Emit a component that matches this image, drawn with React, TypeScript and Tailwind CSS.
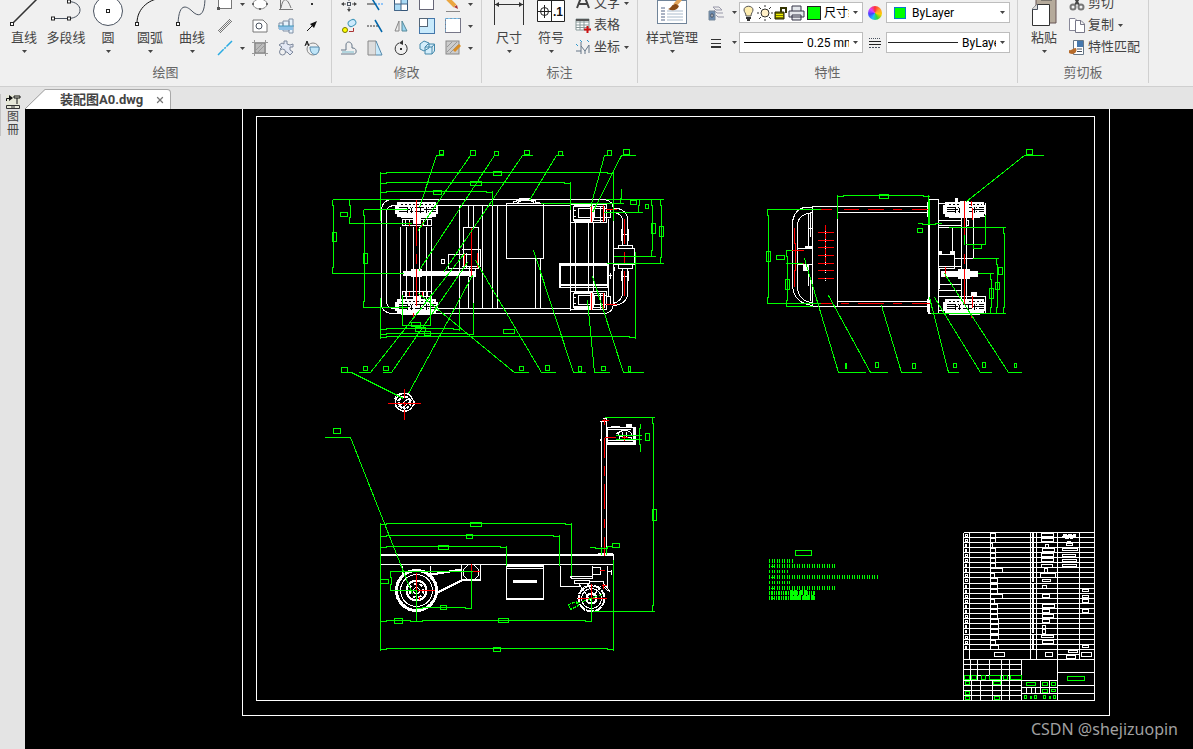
import type { ReactNode } from 'react';
import { X } from 'lucide-react';

type Box = [number, number, number, number];

const hdim = (x1: number, x2: number, y: number) =>
  `M${x1} ${y + 1}H${x1 + 6}V${y}H${x2 - 6}V${y + 1}H${x2}`;
const vdim = (y1: number, y2: number, x: number) =>
  `M${x} ${y1}V${y1 + 6}H${x + 1}V${y2 - 6}H${x}V${y2}`;

const dimensions = [
  // top view
  hdim(380, 613, 172), hdim(380, 570, 182), hdim(380, 492, 191),
  vdim(199, 273, 332), vdim(199, 223, 349), vdim(209, 307, 363),
  'M380 171V220M613 170V220M570 181V209M492 190V205',
  'M332 199H399M332 273H403M348 223H411M363 209H407M363 307H407',
  hdim(380, 635, 336), hdim(380, 459, 328), hdim(380, 473, 333),
  'M380 297V338M635 251V338M459 308V330M473 302V334M402 294V325H430V294',
  vdim(199, 256, 651), vdim(199, 263, 660),
  'M605 199H663M540 203H623M620 203V198H621V188M603 212H642M638 212V205H639V199M613 256H655M606 263H663',
  // bottom view
  hdim(837, 929, 195), 'M837 194V218M928 194V223M929 199V223',
  vdim(209, 303, 767), 'M766 209H820M766 303H820M785 250H791M785 263H802M785 306H812',
  vdim(250, 306, 786), vdim(227, 313, 1003), vdim(258, 313, 996), vdim(273, 313, 990),
  'M948 227H1005M972 258H998M977 273H993M930 313H1005M985 214V244H965M964 234V244',
  'M917 223H922V224H935V223H941',
  // side view
  vdim(417, 611, 652), 'M604 417H654M592 611H654M615 435H641M615 439H641M640 423V428H639V444H640V451',
  hdim(380, 571, 523), hdim(380, 559, 535), hdim(380, 506, 546),
  'M380 522V650M571 522V575M559 534V565M506 545V565M613 559V650',
  'M389 571H472M389 590H416', vdim(571, 590, 390), 'M416 590V621M471 571V608M591 598V621',
  hdim(416, 471, 607), hdim(380, 416, 620), hdim(416, 591, 620), hdim(380, 613, 648),
  'M589 547H595V548H607V546H612M601 546V554M606 546V554',
];

const leaders = [
  'M443 155H436L419 207', 'M475 155H470L417 231', 'M498 155H494L418 271',
  'M532 155H522L443 272', 'M563 155H556L529 200', 'M611 155H604L590 207',
  'M635 155H621L592 212', 'M341 372H351L403 398', 'M358 372H370L464 253',
  'M382 372H391L467 262', 'M408 393L472 275', 'M418 293L514 372H528',
  'M475 260L541 372H555', 'M533 250L573 372H585', 'M587 300L594 372H609',
  'M592 276L623 372H643', 'M1043 155H1024L966 201', 'M804 258L838 372H865',
  'M828 295L870 372H887', 'M881 305L901 372H921', 'M929 297L948 372H958',
  'M934 297L980 372H991', 'M944 273L1008 372H1021', 'M324 437H350L412 594',
];

const tags: Box[] = [
  [493, 171, 8, 4], [470, 181, 11, 4], [433, 190, 8, 4], [332, 232, 4, 9], [340, 212, 7, 4],
  [363, 253, 4, 10], [503, 329, 11, 4], [415, 327, 10, 4], [424, 331, 6, 4], [411, 322, 9, 4],
  [630, 200, 6, 4], [645, 204, 3, 4], [651, 223, 4, 10], [659, 226, 4, 10],
  [439, 150, 4, 4], [470, 150, 5, 5], [494, 151, 4, 4], [524, 150, 5, 4], [558, 151, 4, 4],
  [607, 150, 4, 5], [623, 149, 6, 5], [341, 367, 6, 5], [363, 366, 4, 4], [383, 366, 5, 4],
  [519, 366, 4, 4], [545, 365, 4, 5], [578, 366, 3, 5], [601, 366, 4, 4], [628, 366, 2, 5],
  [879, 194, 9, 4], [766, 251, 4, 10], [776, 255, 8, 4], [785, 279, 4, 10], [973, 244, 8, 4],
  [998, 267, 4, 7], [995, 282, 4, 7], [989, 288, 4, 10], [917, 228, 5, 4], [1026, 149, 6, 5],
  [845, 363, 1, 5], [875, 362, 3, 5], [912, 363, 3, 5], [953, 363, 3, 4], [982, 362, 3, 5],
  [1014, 363, 2, 4], [333, 428, 7, 5], [652, 509, 4, 11], [645, 433, 4, 7], [470, 522, 11, 4],
  [466, 534, 6, 4], [438, 545, 10, 4], [380, 579, 8, 4], [440, 605, 6, 4], [394, 618, 8, 5],
  [498, 618, 10, 4], [493, 647, 7, 4], [612, 543, 7, 4], [795, 550, 16, 5],
  // title block
  [1067, 676, 17, 4], [964, 675, 5, 4], [971, 675, 5, 4], [981, 675, 4, 4], [989, 675, 11, 4],
  [1003, 675, 4, 4], [1010, 675, 11, 4], [965, 681, 4, 3], [993, 681, 7, 3], [965, 691, 4, 3],
  [965, 696, 4, 3], [994, 696, 5, 3], [1026, 682, 9, 3], [1042, 682, 5, 3], [1051, 682, 4, 3],
  [1042, 689, 5, 3], [1051, 689, 4, 2], [1024, 695, 2, 3], [1030, 696, 0, 2], [1034, 695, 2, 3],
  [1043, 695, 2, 3], [1049, 696, 0, 2], [1053, 695, 2, 3],
];

const rowLines = [
  532, 537, 542, 547, 552, 557, 562, 567, 572, 577, 583, 588, 593, 598, 603, 608, 613, 618, 623,
  628, 634, 639, 644, 649,
];

// widths of the name boxes and of the material boxes, row by row
const nameWidths = [5, 5, 2, 5, 5, 5, 5, 12, 4, 7, 7, 7, 12, 4, 7, 7, 7, 8, 8, 8, 8, 5, 8];
const materialBoxes: Box[] = [
  [1041, 533, 12, 3], [1041, 538, 12, 3], [1045, 544, 3, 3], [1042, 548, 12, 3], [1041, 553, 12, 3],
  [1041, 558, 12, 3], [1041, 564, 11, 3], [1044, 568, 3, 4], [1040, 573, 15, 4], [1042, 579, 8, 2],
  [1042, 585, 4, 3], [1042, 594, 7, 3], [1042, 604, 12, 3], [1042, 609, 7, 3], [1042, 614, 11, 3],
  [1042, 619, 7, 3], [1042, 625, 3, 3], [1042, 629, 3, 4], [1041, 635, 12, 2], [1042, 640, 11, 3],
  [1066, 543, 6, 2], [1062, 548, 15, 2], [1062, 554, 13, 2], [1062, 559, 14, 2], [1062, 564, 14, 2],
  [1082, 589, 6, 2], [1082, 595, 6, 2], [1082, 599, 6, 3], [1082, 609, 6, 3], [1082, 645, 6, 2],
  [994, 652, 10, 4], [1045, 652, 7, 4], [1066, 655, 9, 3], [1068, 650, 9, 2], [1081, 652, 10, 4],
];

const notes: Box[] = [
  [768, 558, 24, 5], [768, 563, 67, 5], [768, 569, 19, 4], [768, 574, 109, 5],
  [768, 580, 21, 4], [768, 585, 67, 5], [768, 590, 46, 5], [768, 595, 46, 5],
];

function Boxes({ items }: { items: Box[] }) {
  return (
    <>
      {items.map(([x, y, w, h]) => (
        <rect key={`${x}-${y}`} x={x} y={y} width={w || 0.5} height={h} />
      ))}
    </>
  );
}

function Tire({ x, y }: { x: number; y: number }) {
  return (
    <g transform={`translate(${x} ${y})`}>
      <path d="M2 0H40V3H42V11H40V14H36V15H6V14H2V11H0V3H2Z" fill="#fff" />
      <g stroke="#000">
        <path d="M5 2H38" strokeDasharray="2 2" />
        <path d="M3 5H40M3 9H40" strokeDasharray="9 2 1 1 1 2" />
        <path d="M3 7H14M28 7H40" />
        <path d="M12 5V10M16 5V10M25 5V10M31 5V10" />
      </g>
    </g>
  );
}

function TopView() {
  return (
    <g>
      <path d="M391 199H604Q613 200 613 210V303Q612 313 604 313H391Q381 312 381 303V210Q381 200 391 199Z" />
      <path d="M395 205H570M395 308H570M395 205Q386 205 386 212V301Q386 308 395 308" />
      <path d="M400 226V302M406 226V302M413 226V302M419 226V302M426 226V302M431 226V302" />
      <path d="M459 205V308M468 205V227M473 205V227M468 276V308M473 276V308M482 205V308M492 205V308M497 205V308" />
      <path d="M402 219H431V225H402ZM402 291H431V296H402ZM405 219V225M409 219V225M423 219V225M427 219V225M405 291V296M409 291V296M423 291V296M427 291V296" />
      <path d="M413 217H420V223H413ZM413 296H420V301H413Z" fill="#fff" />
      <Tire x={395} y={202} />
      <Tire x={395} y={299} />
      <path d="M403 271H411V269H421V271H475V275H421V276H411V275H403Z" fill="#fff" />
      <path d="M463 227H478V268H463ZM448 254H471V268H448ZM461 249H480V266H461M464 252V267M466 252V267M469 266V276H475V268" />
      <rect x="441" y="259" width="3" height="4" />
      <path d="M506 203H543V258H506ZM535 258V308M540 258V308" />
      <path d="M513 203V201H516V200H519V198H530V200H535V202H539V203M517 202L521 200H530L534 202" />
      <path d="M570 205V310M575 222V291M588 222V291M593 222V291M608 218V296" />
      {[204, 291].map((y) => (
        <g key={y} transform={`translate(0 ${y})`}>
          <path d="M570 0H606V18H570ZM573 2H604V16H573ZM578 4H594V13H578ZM594 4H606V13H594ZM600 1V17M606 5H610V13H606" />
          <path d="M574 0H592V2H574ZM574 15H592V17H574ZM590 2H593V15H590ZM572 6H575M572 12H575" fill="#fff" />
        </g>
      ))}
      <path d="M559 263H608V287H559ZM560 264H607V265H560ZM560 284H607V285H560ZM560 263V287M607 263V287M608 275H611M610 272V278M614 266V270" />
      <path d="M613 208H618Q627 211 627 219V245M613 212Q622 213 622 220V245M621 228V240M628 228V240M621 234H628M621 276H628M621 270V280M628 270V280M622 268V292Q622 300 613 303M627 268V295Q625 304 614 305" />
      <path d="M613 248H634V264H613ZM618 245H632V248H618ZM618 264H632V268H618Z" />
      <g stroke="#f00">
        <path d="M416 199V245M416 253V263M416 268V305M409 221V225M422 221V225M409 291V295M422 291V295M413 312V316" />
        <path d="M471 227V276M464 252V267M477 252V267M591 204V221M603 204V221M591 292V309M603 292V309M605 209H616M605 304H616" />
        <path d="M624 218V243M624 251V262M624 270V295" />
      </g>
      <circle cx="404" cy="402" r="9" />
      <path d="M395 396L399 393H408L415 403L408 410H400L395 406Z" />
      <circle cx="404" cy="402" r="6" strokeWidth="2" strokeDasharray="3 1" />
      <path d="M397 407L409 397M400 409L412 399M396 397L401 393M394 398L399 401" />
      <path d="M387 403H420M404 388V397M404 401V405M404 409V419" stroke="#f00" />
    </g>
  );
}

function BottomView() {
  return (
    <g>
      <path d="M812 207H803Q792 211 792 224V286Q794 303 812 305M812 212Q797 214 797 225V288Q799 301 812 302" />
      <path d="M797 248H812V264H797M804 246H812M808 212V245M810 212V236M808 228H812M808 264V285M810 276V300" />
      <path d="M803 265H808V270H803ZM805 246H811V248H805Z" fill="#fff" />
      <path d="M812 206H837V306H812Z" />
      <path d="M837 206H928M837 212H928M837 301H928M837 306H928M927 201V216M927 298V311" />
      <path d="M928 199H938V313H928ZM929 199V313" />
      <path d="M938 203H945M938 220H961V225H938M938 227H952V252M938 254H954V268H938M954 258H972M938 266H961M939 268V288M938 284H961M961 266V290M938 290H961M938 296H985V313M938 310H945" />
      <path d="M961 215V300M966 215V300M973 215V258M966 220H968V225H966M973 216H985M985 202V214" />
      <Tire x={943} y={202} />
      <Tire x={943} y={299} />
      <path d="M941 271H958V269H969V271H977V276H969V278H958V276H941ZM960 201H968V215H960ZM955 198H957V203H955ZM971 292H976V295H971ZM960 299H968V303H960ZM939 251H941V254H939ZM950 251H954V254H950Z" fill="#fff" />
      <g stroke="#f00">
        <path d="M820 209H831M843 209H858M867 209H883M892 209H901M911 209H928M820 303H831M840 303H848M857 303H883M892 303H901M911 303H930" />
        <path d="M825 224V264M817 232H833M817 240H833M817 247H833M817 255H833M817 263H833M817 270H833M817 278H833" />
        <path d="M794 227V243H795V270H794V286M791 250H803M791 263H803" />
        <path d="M964 200V234M964 253V263M964 268V304M971 200V205M972 207V219M972 295V307M945 266V276M971 314V317" />
      </g>
      <path d="M825 230V234M825 238V242M825 245V249M825 253V257M825 261V265M825 269V273M825 277V281" strokeDasharray="1 1" />
    </g>
  );
}

function SideView() {
  return (
    <g>
      <path d="M380 554H613M380 555H613M380 564H613M613 555V569M597 553H612" />
      <path d="M601 420V554M606 420V554M602 418H606V421H599M600 438V440M607 427H634V443H607ZM607 429H630M607 440H634" />
      <path d="M633 427H635V444H607V442H633ZM626 424H631V427H626ZM611 426H619V427H611Z" fill="#fff" />
      <path d="M617 436Q618 430 624 430Q631 430 632 436M619 440V436H622V431M626 431V437H631V440M616 433L620 431" />
      <path d="M506 565H543V599H506ZM506 566H543M506 568H543M506 598H543" />
      <path d="M513 580H536V582H513Z" fill="#fff" />
      <circle cx="416" cy="590" r="20" strokeWidth="3" />
      <circle cx="416" cy="590" r="16" />
      <circle cx="416" cy="590" r="10" strokeWidth="2" />
      <circle cx="416" cy="590" r="7" strokeWidth="2" strokeDasharray="3 3" />
      <circle cx="416" cy="590" r="3" />
      <path d="M402 565V574M430 565V574M461 564V580H480V564M461 579H480M467 565L463 569V575L467 579H474L478 575V569L474 565" />
      <path d="M431 574L461 569M435 593L463 579" strokeWidth="2" />
      <path d="M560 565V586H579M571 565V576M570 576H592V578H571ZM574 580H589V583H574ZM592 565V576M592 567H600V574H592M607 565V587M607 571H611M611 569V574M588 581H603V586" />
      <path d="M578 583L591 601M587 583L594 596M600 586L594 594M604 584L610 592M603 586L608 591" />
      <circle cx="591" cy="598" r="13" strokeWidth="2" strokeDasharray="8 1" />
      <circle cx="591" cy="598" r="10" />
      <circle cx="591" cy="598" r="5" strokeWidth="2" />
      <g stroke="#f00">
        <path d="M604 418V424M601 420H608M604 437H615M604 437V457M604 465V475M604 483V508M604 518V527M604 536V555M621 437H627M624 434V440" />
        <path d="M416 572V592M417 590H434M419 596V599M471 563V571H479M577 598H606M591 583V605M599 570H604M601 585H606M603 583V588" />
      </g>
      <g stroke="#0f0">
        <path d="M576 603L602 594" strokeDasharray="4 2" />
        <path d="M568 604L576 601L578 605L570 609Z" strokeDasharray="3 1" />
      </g>
    </g>
  );
}

function TitleBlock() {
  return (
    <g>
      {rowLines.map((y) => (
        <path key={y} d={`M963 ${y}H1094`} />
      ))}
      <path d="M963 532V700M969 532V659M1030 532V659M1036 532V659M1057 532V700M1079 532V659M963 659H1094M1057 654H1079" />
      {rowLines.slice(0, -1).map((y, i) => (
        <g key={y}>
          <rect x={990} y={y + 1} width={nameWidths[i]} height={4} />
          <rect x={965} y={y + 2} width={i % 4 < 2 ? 2 : 1} height={2} />
          <rect x={1032} y={y + 1} width={1} height={3} />
        </g>
      ))}
      <path d="M1062 534H1075V536H1062ZM1064 538H1072M1066 541H1070" fill="#fff" strokeDasharray="4 1" />
      <Boxes items={materialBoxes} />
      <path d="M963 664H1021M963 669H1021M963 675H1021M963 680H1057M963 685H1021M963 690H1021M963 695H1021" />
      <path d="M970 659V680M977 659V680M989 659V680M1001 659V700M1009 659V700M971 680V700M980 680V700M992 680V700M1021 659V700" />
      <path d="M1021 687H1057M1021 693H1057M1040 680V693M1049 680V693M1026 687V693M1031 687V693M1035 687V693M1057 672H1094M1057 685H1094M1057 693H1094" />
    </g>
  );
}

function Drawing() {
  return (
    <svg
      viewBox="25 109 1168 640"
      preserveAspectRatio="xMinYMin slice"
      className="block h-full w-full"
      shapeRendering="crispEdges"
      role="img"
      aria-label="装配图A0"
    >
      <g transform="translate(0.5 0.5)" fill="none" stroke="#fff">
        <path d="M242 100V715H1109V100" />
        <rect x="256" y="116" width="838" height="584" />
        <TopView />
        <BottomView />
        <SideView />
        <TitleBlock />
        <g stroke="#0f0">
          {dimensions.map((d) => (
            <path key={d} d={d} />
          ))}
          {leaders.map((d) => (
            <path key={d} d={d} />
          ))}
          <Boxes items={tags} />
          {notes.map(([x, y, w, h], i) => (
            <path
              key={y}
              d={`M${x} ${y + 2}H${x + w}`}
              strokeWidth={h - 1}
              strokeDasharray={i > 5 ? '1 1 2 1 1 1' : '1 2 1 1'}
            />
          ))}
          <path d="M789 592H797M799 592H806M789 597H800M802 597H813" strokeWidth="5" strokeDasharray="3 1" />
          <path d="M769 560V562M770 566H773M770 577H773M770 588H773M770 598H773" />
        </g>
      </g>
    </svg>
  );
}

function Arrow() {
  return (
    <svg width="5" height="3" viewBox="0 0 5 3" className="shrink-0" aria-hidden="true">
      <path d="M0 0H5L2.5 3Z" fill="#444" />
    </svg>
  );
}

function Icon({ w = 16, h = 16, children }: { w?: number; h?: number; children: ReactNode }) {
  return (
    <svg
      width={w}
      height={h}
      viewBox={`0 0 ${w} ${h}`}
      fill="none"
      stroke="#4a5360"
      className="shrink-0"
      aria-hidden="true"
    >
      {children}
    </svg>
  );
}

function BigButton({ icon, label, arrow = true }: { icon: ReactNode; label: string; arrow?: boolean }) {
  return (
    <button type="button" className="flex min-w-[42px] shrink-0 flex-col items-center">
      {icon}
      <span className="text-[13px] leading-[18px] whitespace-nowrap">{label}</span>
      <span className="flex h-[10px] items-center">{arrow && <Arrow />}</span>
    </button>
  );
}

function Tool({ name, children }: { name: string; children: ReactNode }) {
  return (
    <button type="button" aria-label={name} className="flex h-[22px] items-center justify-center">
      {children}
    </button>
  );
}

function TextTool({ icon, label, arrow = false }: { icon: ReactNode; label: string; arrow?: boolean }) {
  return (
    <button type="button" className="flex h-[22px] items-center gap-[3px] text-[13px] whitespace-nowrap">
      {icon}
      <span>{label}</span>
      {arrow && <span className="ml-px flex"><Arrow /></span>}
    </button>
  );
}

function Group({ title, className, children }: { title: string; className: string; children: ReactNode }) {
  return (
    <section className={`flex h-[83px] shrink-0 flex-col justify-end overflow-hidden border-r border-[#d0d0d0] ${className}`}>
      <div className="flex items-end">{children}</div>
      <h2 className="h-[21px] shrink-0 text-center text-[13px] leading-5 text-[#666]">{title}</h2>
    </section>
  );
}

const handle = (x: number, y: number) => <rect x={x} y={y} width="3" height="3" fill="#fff" stroke="#222" />;

function DrawGroup() {
  return (
    <Group title="绘图" className="w-[332px]">
      <div className="flex pb-[6px] pl-[3px]">
        <BigButton
          label="直线"
          icon={<Icon w={32} h={32}><path d="M4 28L31 1" stroke="#333" strokeWidth="1.5" />{handle(2.5, 26.5)}</Icon>}
        />
        <BigButton
          label="多段线"
          arrow={false}
          icon={<Icon w={32} h={32}><path d="M3 22.500H18C34 22.500 34 5.500 18 5.500" />{handle(1.5, 21)}{handle(17.5, 21)}{handle(17.5, 4)}</Icon>}
        />
        <BigButton
          label="圆"
          icon={<Icon w={32} h={32}><circle cx="16" cy="15" r="14.500" fill="#fff" />{handle(14.5, 13.5)}</Icon>}
        />
        <BigButton
          label="圆弧"
          icon={<Icon w={32} h={32}><path d="M3 27C3 12 16 2 30 2" stroke="#111" />{handle(1.5, 26.5)}{handle(28.5, 0.5)}</Icon>}
        />
        <BigButton
          label="曲线"
          icon={<Icon w={32} h={32}><path d="M2 28C3 4 12 11 17 16C25 23 29 16 29 1" />{handle(0.5, 26.5)}</Icon>}
        />
      </div>
      <div className="ml-[2px] grid grid-cols-[20px_14px_22px_30px_22px] pb-[3px]">
        <Tool name="矩形"><Icon><rect x="1.500" y="1.500" width="13" height="11" fill="#fff" stroke="#777" /><path d="M0 11H3V14H0Z" fill="#555" stroke="none" /></Icon></Tool>
        <Tool name="矩形选项"><Arrow /></Tool>
        <Tool name="椭圆"><Icon><ellipse cx="8" cy="8" rx="7" ry="5" fill="#fff" stroke="#888" /><path d="M7 3H9M7 13H9M1 7V9M15 7V9" stroke="#111" /></Icon></Tool>
        <Tool name="函数曲线"><Icon><path d="M2.500 0V14M1 13.500H15M3 12C5 1 9 1 13 12" stroke="#777" /></Icon></Tool>
        <Tool name="点"><Icon><rect x="7" y="7" width="2" height="2" fill="#333" stroke="none" /></Icon></Tool>

        <Tool name="双线"><Icon><path d="M1 13L13 1M3 15L15 3M2 14L14 2" stroke="#777" /></Icon></Tool>
        <span />
        <Tool name="面域"><Icon><path d="M1 2H11L15 6V14H1Z" fill="#fff" stroke="#777" /><circle cx="7" cy="8" r="3" /></Icon></Tool>
        <Tool name="轴"><Icon><path d="M11 1H15V15H11ZM5 3H11V13H5ZM1 5H5V11H1Z" fill="#e8f2fb" stroke="#8090a5" /><path d="M1 8H15V12H1Z" fill="#8fc0e6" stroke="none" /><path d="M0 8H16" stroke="#49b" /></Icon></Tool>
        <Tool name="箭头"><Icon><path d="M3 13L9 7" stroke="#111" /><path d="M13 3L6 6L10 10Z" fill="#111" stroke="none" /></Icon></Tool>

        <Tool name="中心线"><Icon><path d="M1 15L15 1" stroke="#29abe2" strokeDasharray="8 1 2 1" strokeWidth="1.500" /></Icon></Tool>
        <Tool name="中心线选项"><Arrow /></Tool>
        <Tool name="填充"><Icon><path d="M3 3H13V13H3Z" fill="#bbb" stroke="#777" /><path d="M0 2.500H16M0 13.500H16M2.500 0V16M13.500 0V16M4 10L10 4M6 12L12 6" stroke="#999" /></Icon></Tool>
        <Tool name="齿轮"><Icon><path d="M6 1H9V4L12 5L15 4V7H12V10L15 12L12 15L9 12H7L6 10L2 9L4 7L1 5L4 3L6 4Z" fill="#e3e8f4" stroke="#7c879b" /><circle cx="4.500" cy="12" r="3" fill="#f0f0f0" stroke="#7c879b" /></Icon></Tool>
        <Tool name="局部放大"><Icon><circle cx="9" cy="9" r="6" stroke="#888" /><path d="M6 7H15C16 17 6 17 6 7Z" fill="#bfe5f8" stroke="#58a" /><path d="M1 6L3 1L5 6M2 4H4" stroke="#111" /></Icon></Tool>
      </div>
    </Group>
  );
}

function ModifyGroup() {
  return (
    <Group title="修改" className="w-[150px]">
      <div className="ml-[4px] grid grid-cols-[26px_26px_26px_26px_26px_8px] pb-[3px]">
        <Tool name="移动"><Icon><path d="M8 2V5M8 11V14M2 8H5M11 8H14" stroke="#555" /><path d="M6 3L8 0L10 3ZM6 13L8 16L10 13ZM3 6L0 8L3 10ZM13 6L16 8L13 10Z" fill="#444" stroke="none" /><rect x="6.500" y="6.500" width="3" height="3" /></Icon></Tool>
        <Tool name="裁剪"><Icon><path d="M0 8H8" stroke="#333" /><path d="M8 8H16" stroke="#39f" strokeDasharray="2 1" /><path d="M4 1L12 14" stroke="#06a" strokeWidth="1.500" /></Icon></Tool>
        <Tool name="阵列"><Icon><path d="M1.500 1.500H14.500V14.500H1.500Z" fill="#fff" stroke="#357" /><path d="M8 1.500H14.500V8H8ZM1.500 8H8V14.500H1.500Z" fill="#a9daf5" stroke="#468" /></Icon></Tool>
        <Tool name="矩形框"><Icon><rect x=".5" y=".5" width="14" height="13" fill="#fff" stroke="#667" /></Icon></Tool>
        <Tool name="编辑"><Icon><path d="M1 1L10 10" stroke="#eba640" strokeWidth="4" /><path d="M9 11L12 9L13 13Z" fill="#a33" stroke="none" /><path d="M1 15.500H15" stroke="#888" /></Icon></Tool>
        <Tool name="编辑选项"><Arrow /></Tool>

        <Tool name="复制对象"><Icon><rect x="7" y="2" width="8" height="6" rx="3" transform="rotate(-30 11 5)" fill="#cdeafc" stroke="#49b" /><circle cx="4" cy="12" r="2.500" fill="#ff0" stroke="#770" /><path d="M8 13.500H12.500V10" stroke="#a33" /></Icon></Tool>
        <Tool name="延伸"><Icon><path d="M0 8H11" stroke="#333" strokeDasharray="2 1" /><path d="M8 2L15 14" stroke="#06a" strokeWidth="1.500" /></Icon></Tool>
        <Tool name="镜像"><Icon><path d="M6 3V13H2Z" fill="#eee" stroke="#888" /><path d="M9 3V13H14Z" fill="#9cd5f0" stroke="#589" /></Icon></Tool>
        <Tool name="缩放"><Icon><rect x=".5" y=".5" width="15" height="15" fill="#c8eafc" stroke="#47a" /><rect x=".5" y=".5" width="8" height="8" fill="#fff" stroke="#567" /></Icon></Tool>
        <Tool name="拉伸"><Icon><rect x=".5" y=".5" width="15" height="14" fill="#fff" stroke="#778" /><path d="M0 14V.5H15" stroke="#7bc4ee" strokeDasharray="3 1" /></Icon></Tool>
        <Tool name="拉伸选项"><Arrow /></Tool>

        <Tool name="偏移"><Icon><path d="M0 10H5V5C5 1 10 1 11 5V8H12C16 8 16 14 13 14H0" stroke="#678" /><path d="M1 12H13" stroke="#7bc" /></Icon></Tool>
        <Tool name="斜切"><Icon><path d="M1 1H9V15H1Z" fill="#ddd" stroke="#888" /><path d="M9 1L15 15H9" fill="#c8eafc" stroke="#58a" /></Icon></Tool>
        <Tool name="旋转"><Icon><path d="M6 3A6 6 0 1 0 12 4" stroke="#333" /><path d="M10 0L6 3L10 5ZM7 8H9V10H7Z" fill="#333" stroke="none" /></Icon></Tool>
        <Tool name="三维"><Icon><path d="M1 4L5 1L10 3V8L5 11L1 9ZM6 7H13V14H6ZM6 7L9 4H15.500L13 7M15.500 4V11L13 14" fill="#d3edfb" stroke="#48a" /></Icon></Tool>
        <Tool name="填充编辑"><Icon><rect x="1" y="1" width="13" height="13" fill="#ccc" stroke="#888" /><path d="M2 12L12 2M5 13L13 5M2 7L7 2" stroke="#999" /><path d="M9 11L15 5" stroke="#d98d24" strokeWidth="3" /></Icon></Tool>
        <Tool name="填充编辑选项"><Arrow /></Tool>
      </div>
    </Group>
  );
}

function AnnotateGroup() {
  return (
    <Group title="标注" className="w-[156px]">
      <div className="flex pb-[6px] pl-[6px]">
        <BigButton
          label="尺寸"
          icon={<Icon w={30} h={32}><path d="M.5 0V29M29.500 0V29M1 8.500H29" stroke="#333" /><path d="M1 8.500L5 6V11ZM29 8.500L25 6V11Z" fill="#333" stroke="none" /></Icon>}
        />
        <BigButton
          label="符号"
          icon={
            <Icon w={28} h={32}>
              <path d="M.5 4.500H27.500V25.500H.5ZM14.500 4V26" fill="#fff" stroke="#222" />
              <circle cx="7.500" cy="15.500" r="4" stroke="#222" />
              <path d="M1 15.500H14M7.500 9V22" stroke="#222" />
              <text x="16" y="20" fill="#111" stroke="none" fontSize="12" fontWeight="700" fontFamily="Liberation Sans, sans-serif">.1</text>
            </Icon>
          }
        />
      </div>
      <div className="ml-[3px] flex flex-col pb-1">
        <TextTool
          label="文字"
          arrow
          icon={<Icon><path d="M2 13L7 0H9L14 13M4 9H12" stroke="#444" strokeWidth="2" /></Icon>}
        />
        <TextTool
          label="表格"
          icon={<Icon><path d="M1 2H14V13H1ZM1 5H14M1 8H14M1 10.500H14M5 2V13M9 2V13" fill="#fff" stroke="#899" /><path d="M1 3H14" stroke="#555" strokeWidth="2" /><path d="M12.500 9V16M9 12.500H16" stroke="#c11" strokeWidth="2" /></Icon>}
        />
        <TextTool
          label="坐标"
          arrow
          icon={<Icon><path d="M6 3V15M1 12H6M6 7L10 12L14 6V14M10 12V15" stroke="#678" /><path d="M5 1L7 3M12 1L14 3M1 5L3 7" stroke="#39c" /></Icon>}
        />
      </div>
    </Group>
  );
}

const combo = 'ml-[2px] flex h-[21px] w-[124px] items-center border border-[#bdbdbd] bg-white pr-1';
const comboSelect =
  "mr-1 min-w-0 flex-1 appearance-none overflow-hidden bg-transparent font-['Roboto','Noto_Sans_CJK_SC',sans-serif] text-[12px] text-black";

function PropertyGroup() {
  return (
    <Group title="特性" className="w-[380px]">
      <div className="pb-[6px] pl-[8px]">
        <BigButton
          label="样式管理"
          icon={
            <Icon w={34} h={32}>
              <rect x="2.500" y="4.500" width="29" height="23" fill="#fff" stroke="#708499" />
              <path d="M6 12H10M6 15H10M6 18H10M6 21H10M6 24H10" stroke="#568" />
              <path d="M12 15H28M12 18H28M12 21H28M12 24H28" stroke="#abc" />
              <path d="M20 9L28 0" stroke="#e2a55b" strokeWidth="4" />
              <path d="M13 13C17 12 16 8 21 8L24 10C22 15 17 15 13 13Z" fill="#8a4b16" stroke="none" />
            </Icon>
          }
        />
      </div>
      <div className="ml-[10px] grid grid-cols-[16px_13px_129px_18px_126px] items-center gap-y-[9px] pb-[9px]">
        <Icon><path d="M1 6H7V15H1Z" fill="#6d8caf" stroke="#789" /><path d="M3 9H5V12H3Z" fill="#fff" /><path d="M5 2H11L14 5H8ZM6 5L9 8H15M8 10L10 12H16" stroke="#99a" fill="#eee" /></Icon>
        <span className="flex justify-end"><Arrow /></span>
        <div className={combo}>
          <Icon w={17} h={18}><path d="M6 12C6 9 4 8 4 6C4 1 13 1 13 6C13 8 11 9 11 12Z" fill="#ffeeb0" stroke="#555" /><path d="M6 14H11M7 16H10" stroke="#333" strokeWidth="2" /></Icon>
          <Icon w={16} h={18}><circle cx="8" cy="9" r="4" fill="#fff0c8" stroke="#333" /><path d="M8 1V3M8 15V17M0 9H2M14 9H16M2 3L4 5M12 13L14 15M2 15L4 13M12 5L14 3" stroke="#333" /></Icon>
          <Icon w={15} h={18}><path d="M2 8H11V15H2Z" fill="#770" stroke="#220" /><path d="M3 10.500H10M3 12.500H10" stroke="#ee0" /><path d="M8 8V4H13V9" stroke="#330" strokeWidth="2" /></Icon>
          <Icon w={17} h={18}><path d="M4 7V2H13V7M1 7H16V13H1ZM4 11H13V16H4Z" fill="#e4e7eb" stroke="#334" /></Icon>
          <span className="ml-[2px] h-[14px] w-[14px] shrink-0 border border-[#222] bg-[#0f0]" />
          <select aria-label="图层" className={`${comboSelect} ml-[3px]`}>
            <option>尺寸线层</option>
          </select>
          <Arrow />
        </div>
        <span
          aria-hidden="true"
          className="h-[14px] w-[14px] justify-self-center rounded-full bg-[conic-gradient(#f33,#f93,#fc0,#3d3,#2bf,#44f,#d4f,#f33)]"
        />
        <div className={combo}>
          <span className="mr-[6px] ml-[7px] h-3 w-3 shrink-0 border border-[#0878d0] bg-[#0f0]" />
          <select aria-label="颜色" className={comboSelect}>
            <option>ByLayer</option>
          </select>
          <Arrow />
        </div>

        <Icon><path d="M3 4.500H13M3 8.500H13" stroke="#333" /><path d="M3 12H13" stroke="#333" strokeWidth="2" /></Icon>
        <span className="flex justify-end"><Arrow /></span>
        <div className={combo}>
          <span className="mr-1 ml-1 h-px w-[59px] shrink-0 bg-black" />
          <select aria-label="线宽" className={comboSelect}>
            <option>0.25 mm</option>
          </select>
          <Arrow />
        </div>
        <span className="flex justify-center">
          <Icon w={14}><path d="M1 3.500H13" strokeDasharray="1 1" /><path d="M1 6.500H13M1 9.500H13" stroke="#222" /><path d="M1 12.500H13" strokeDasharray="2 1" /></Icon>
        </span>
        <div className={combo}>
          <span className="mr-1 ml-px h-px w-[70px] shrink-0 bg-[#222]" />
          <select aria-label="线型" className={comboSelect}>
            <option>ByLayer</option>
          </select>
          <Arrow />
        </div>
      </div>
    </Group>
  );
}

function ClipboardGroup() {
  return (
    <Group title="剪切板" className="w-[131px]">
      <div className="pb-[6px] pl-[5px]">
        <BigButton
          label="粘贴"
          icon={<Icon w={28} h={32}><path d="M6 0H26V27H6Z" fill="#b5aa9b" stroke="#655" /><path d="M11 0H22V4H11Z" fill="#fff" stroke="#444" /><path d="M7 8.500H19.500V29.500H2.500V13Z" fill="#fff" stroke="#333" /><path d="M7.500 8V13.500H2" fill="#ddd" /></Icon>}
        />
      </div>
      <div className="ml-[4px] flex flex-col pb-1">
        <TextTool
          label="剪切"
          icon={<Icon><path d="M4 0L10 10M12 0L6 10" stroke="#444" strokeWidth="2" /><circle cx="4" cy="12" r="2.500" stroke="#777" strokeWidth="2" /><circle cx="12" cy="12" r="2.500" stroke="#777" strokeWidth="2" /></Icon>}
        />
        <TextTool
          label="复制"
          arrow
          icon={<Icon><path d="M.5 1.500H6L9.500 5V13.500H.5Z" fill="#fff" stroke="#889" /><path d="M6.500 3.500H12L15.500 7V15.500H6.500ZM11.500 4V7.500H15" fill="#fff" stroke="#778" /></Icon>}
        />
        <TextTool
          label="特性匹配"
          icon={<Icon><path d="M4.500 1.500H14.500V15.500H4.500Z" fill="#fff" stroke="#678" /><path d="M8 2H14V8H8Z" fill="#4577ad" stroke="none" /><path d="M8 10H13M8 12.500H13" /><path d="M0 11C3 12 4 9 7 9C9 13 5 17 0 14Z" fill="#b66b2b" stroke="none" /></Icon>}
        />
      </div>
    </Group>
  );
}

export default function App() {
  return (
    <div className="flex h-screen flex-col overflow-hidden bg-[#e4e4e4] font-['Noto_Sans','Noto_Sans_CJK_SC',sans-serif] text-[#444]">
      <header className="flex h-[87px] shrink-0 items-start overflow-hidden border-b border-[#cfcfcf] bg-[#f0f0f0]">
        <DrawGroup />
        <ModifyGroup />
        <AnnotateGroup />
        <PropertyGroup />
        <ClipboardGroup />
      </header>

      <div className="flex min-h-0 flex-1">
        <aside className="w-[25px] shrink-0 pt-[7px]">
          <button type="button" className="flex w-full flex-col items-center border-l border-[#c4c4c4] text-[12px] leading-[13px]">
            <Icon w={16} h={16}>
              <path d="M1 1H15V15H1Z" fill="#e6e8d8" stroke="none" />
              <path d="M1.500 7V4.500H5M9 2H15V4H9ZM12 4V10" stroke="#111" />
              <path d="M4 1L8 4L4 7Z" fill="#111" stroke="none" />
              <path d="M1.500 11.500H14.500V14.500H1.500ZM6 13H10" stroke="#333" />
            </Icon>
            <span className="w-3 break-all">图冊</span>
          </button>
        </aside>

        <div className="flex min-w-0 flex-1 flex-col">
          <nav className="flex h-[22px] shrink-0 items-end">
            <svg width="20" height="20" viewBox="0 0 20 20" className="shrink-0" aria-hidden="true">
              <path d="M0 20L20 0.500V20Z" fill="#fff" />
              <path d="M0 20L20 0.500" stroke="#999" fill="none" />
            </svg>
            <div className="flex h-5 items-center gap-3 rounded-tr-sm border-t border-r border-[#a8a8a8] bg-white pr-[5px] pl-[15px]">
              <a
                href="#drawing"
                className="font-['Roboto','Noto_Sans_CJK_SC',sans-serif] text-[13px] leading-[18px] font-bold whitespace-nowrap"
              >
                装配图A0.dwg
              </a>
              <button type="button" aria-label="关闭">
                <X size={10} strokeWidth={3} color="#777" />
              </button>
            </div>
          </nav>
          <main id="drawing" className="relative min-h-0 flex-1 bg-black">
            <Drawing />
            <p className="absolute right-[15px] bottom-2 text-[16px] leading-6 text-[#a0a0a0]">CSDN @shejizuopin</p>
          </main>
        </div>
      </div>
    </div>
  );
}
